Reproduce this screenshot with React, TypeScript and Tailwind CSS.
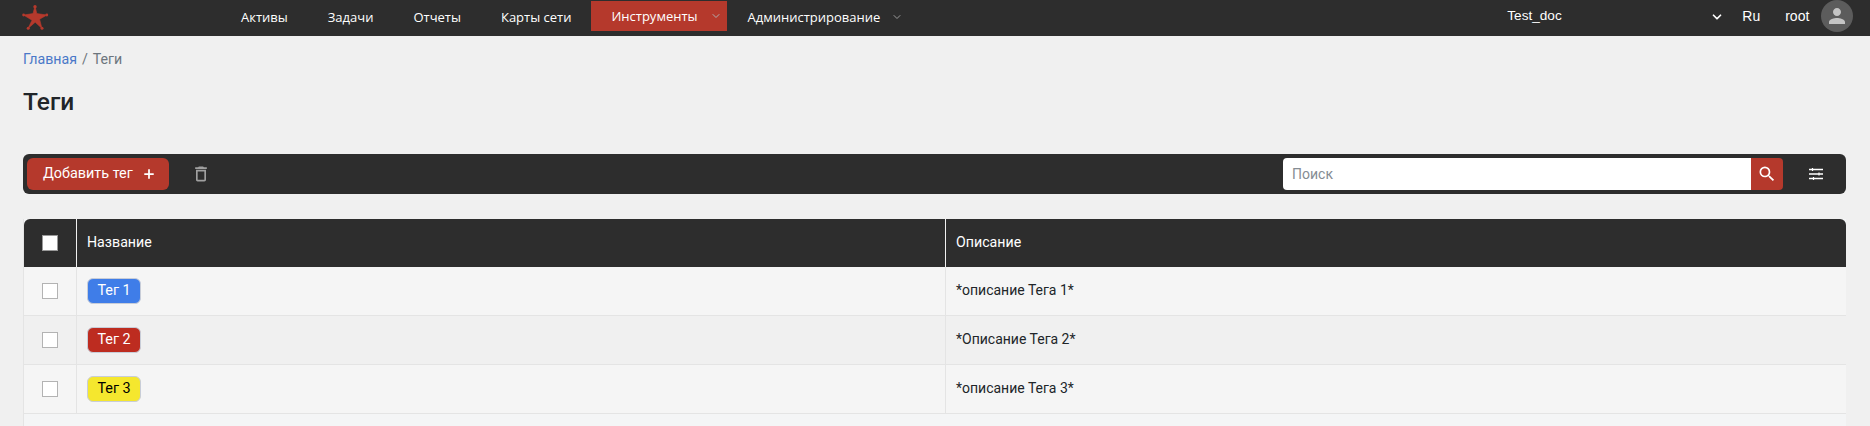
import { ChevronDown, Plus } from 'lucide-react';
import { MdOutlineDelete, MdPerson, MdSearch } from 'react-icons/md';

// Nav items; the gaps between them are the same except around the active one
const navLinks = ['Активы', 'Задачи', 'Отчеты', 'Карты сети'];

const tags = [
  { id: 1, name: 'Тег 1', description: '*описание Тега 1*', color: 'bg-[#3f7de8] text-white', row: 'bg-[#f5f5f5]' },
  { id: 2, name: 'Тег 2', description: '*Описание Тега 2*', color: 'bg-[#bd2c20] text-white', row: 'bg-[#f0f0f0]' },
  { id: 3, name: 'Тег 3', description: '*описание Тега 3*', color: 'bg-[#f5e72e] text-black', row: 'bg-[#f5f5f5]' },
];

function Star() {
  return (
    <svg width="28" height="28" viewBox="0 0 28 28" className="text-[#b5392c]">
      <path
        d="M14 4 L15.8 11.6 L26 13 L18.6 17.2 L21 26.5 L14.2 20.2 L7 26.5 L11 18.2 L2.5 13 L12 11.6 Z"
        fill="currentColor"
        stroke="currentColor"
        strokeWidth="0.6"
        strokeLinejoin="round"
      />
      <circle cx="14" cy="4.8" r="1.7" fill="currentColor" />
      <circle cx="25.8" cy="13" r="1.4" fill="currentColor" />
      <circle cx="2.6" cy="13" r="1.4" fill="currentColor" />
      <circle cx="21" cy="26.2" r="1.5" fill="currentColor" />
      <circle cx="7.2" cy="26.2" r="1.5" fill="currentColor" />
    </svg>
  );
}

function Filters() {
  return (
    <svg width="16" height="14" viewBox="0 0 16 14" fill="none" className="ml-[25px] mr-[18px] text-white">
      <path d="M1 2.5H15M1 7H15M1 11.5H15" stroke="currentColor" strokeWidth="1.4" />
      <path d="M4.5 1V4M11 5.5V8.5M5.5 10V13" stroke="currentColor" strokeWidth="1.2" />
    </svg>
  );
}

function Checkbox({ header }: { header?: boolean }) {
  return (
    <div className={`mx-auto w-4 h-4 bg-white border ${header ? 'border-[#999]' : 'border-[#b3b3b3]'}`} />
  );
}

export default function App() {
  return (
    <div className="min-h-[426px] bg-[#f0f0f0] overflow-hidden font-['Roboto',sans-serif] text-[14px] text-[#212529]">
      {/* Top bar */}
      <header className="flex h-9 bg-[#2d2d2d] text-white">
        <div className="w-[241px] shrink-0 pl-[21px] pt-[2px]">
          <Star />
        </div>
        <nav className="flex items-start font-['Open_Sans',sans-serif] text-[13px] leading-[34px]">
          {navLinks.map((link) => (
            <a key={link} className="mr-[40px]">{link}</a>
          ))}
          <a className="-ml-[20px] mt-px flex h-[30px] w-[136px] items-center bg-[#b5392c] pl-[20px] leading-none">
            Инструменты
            <ChevronDown className="ml-3 w-3 h-3 text-[#b0b0b0]" />
          </a>
          <a className="ml-[20px] flex items-center h-[34px]">
            Администрирование
            <ChevronDown className="ml-[11px] w-3 h-3 text-[#9a9a9a]" />
          </a>
        </nav>
        <div className="ml-[604px] flex items-start font-['Liberation_Sans',sans-serif] text-[14px]">
          <span className="w-[203px] text-[13.6px] leading-[31px]">Test_doc</span>
          <ChevronDown className="mt-[10px] w-[14px] h-[14px]" strokeWidth={3} />
          <span className="ml-[18px] leading-[33px]">Ru</span>
          <span className="ml-[25px] leading-[33px]">root</span>
          <div className="ml-3 w-8 h-8 rounded-full bg-[#5c5c5c] flex items-center justify-center">
            <MdPerson className="w-6 h-6 text-[#c4c4c4]" />
          </div>
        </div>
      </header>

      <main className="pl-[23px] pr-6">
        {/* Breadcrumbs */}
        <div className="flex h-[46px] items-center pt-[1px] text-[14.2px]">
          <a className="text-[#4a78c8]">Главная</a>
          <span className="mx-[5px] text-[#6c757d]">/</span>
          <span className="text-[#6c757d]">Теги</span>
        </div>

        <h1 className="mt-[6px] text-[24.5px] leading-[28px] font-medium">Теги</h1>

        {/* Toolbar */}
        <div className="mt-[38px] flex h-10 items-center rounded-md bg-[#2d2d2d] px-1">
          <button className="flex h-8 w-[142px] items-center gap-[9px] rounded-md bg-[#b5392c] pl-[16px] text-[14.4px] text-white">
            Добавить тег
            <Plus className="w-[14px] h-[14px]" strokeWidth={3} />
          </button>
          <MdOutlineDelete className="ml-[22px] w-[20px] h-[20px] text-[#a0a0a0]" />
          <div className="ml-auto flex h-8 w-[500px]">
            <input
              placeholder="Поиск"
              className="min-w-0 flex-1 rounded-l-[4px] bg-white pl-[9px] text-[14px] outline-none placeholder:text-[#858c93]"
            />
            <button className="flex w-[32px] items-center justify-center rounded-r-[4px] bg-[#b5392c] text-white">
              <MdSearch className="w-5 h-5" />
            </button>
          </div>
          <Filters />
        </div>

        {/* Tags table */}
        <div className="mt-[25px] bg-[#f4f5f6] border-l border-[#e4e4e4] pb-4">
          <table className="w-full table-fixed border-separate border-spacing-0">
            <colgroup>
              <col className="w-[53px]" />
              <col className="w-[869px]" />
              <col />
            </colgroup>
            <thead>
              <tr className="h-[48px] bg-[#2d2d2d] text-left text-white">
                <th className="rounded-tl-md border-r border-[#f0f0f0]"><Checkbox header /></th>
                <th className="border-r border-[#f0f0f0] pl-[10px] font-normal text-[14.2px]">Название</th>
                <th className="rounded-tr-md pl-[10px] font-normal text-[14.2px]">Описание</th>
              </tr>
            </thead>
            <tbody>
              {tags.map((tag) => (
                <tr key={tag.id} className={`h-[49px] ${tag.row}`}>
                  <td className="border-r border-b border-[#e4e4e4]"><Checkbox /></td>
                  <td className="border-r border-b border-[#e4e4e4] pl-[10px]">
                    <span className={`flex h-[26px] w-[54px] items-center justify-center rounded-md border border-[#c8cdd8] pb-px text-[14.4px] ${tag.color}`}>
                      {tag.name}
                    </span>
                  </td>
                  <td className="border-b border-[#e4e4e4] pl-[10px] pb-[2px]">{tag.description}</td>
                </tr>
              ))}
            </tbody>
          </table>
        </div>
      </main>
    </div>
  );
}
